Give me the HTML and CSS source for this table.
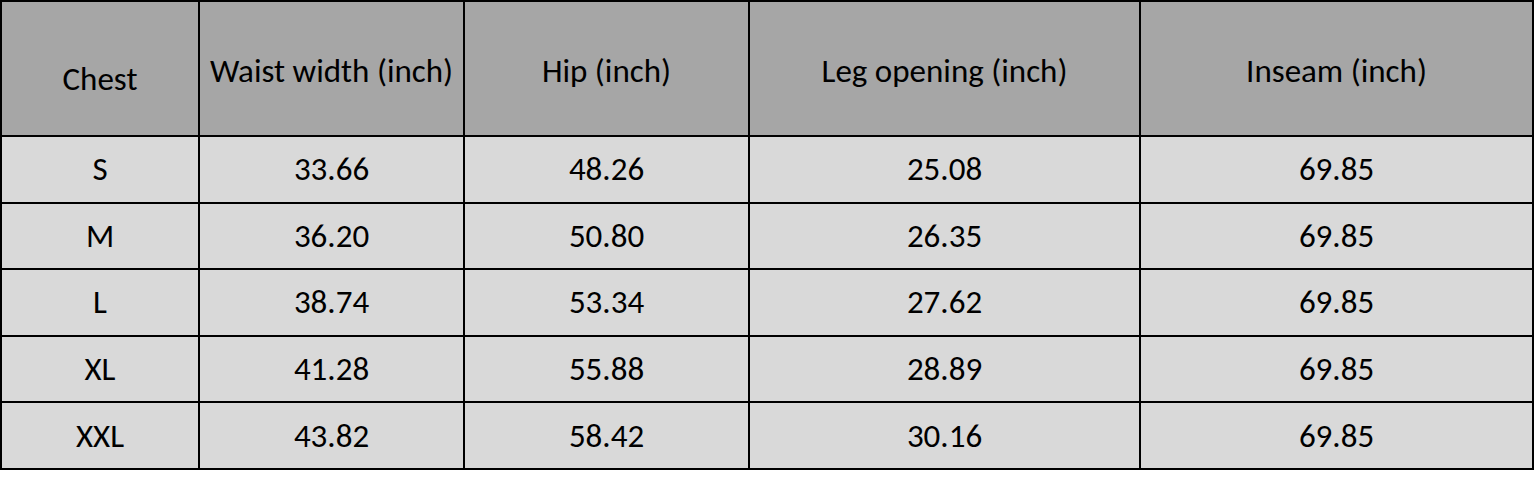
FILE: index.html
```html
<!DOCTYPE html>
<html>
<head>
<meta charset="utf-8">
<link rel="stylesheet" href="styles.css">
</head>
<body>
<table class="size-table">
  <colgroup>
    <col class="c1"><col class="c2"><col class="c3"><col class="c4"><col class="c5">
  </colgroup>
  <thead>
    <tr class="head">
      <th class="chest">Chest</th>
      <th>Waist width (inch)</th>
      <th>Hip (inch)</th>
      <th>Leg opening (inch)</th>
      <th>Inseam (inch)</th>
    </tr>
  </thead>
  <tbody>
    <tr><td>S</td><td>33.66</td><td>48.26</td><td>25.08</td><td>69.85</td></tr>
    <tr><td>M</td><td>36.20</td><td>50.80</td><td>26.35</td><td>69.85</td></tr>
    <tr><td>L</td><td>38.74</td><td>53.34</td><td>27.62</td><td>69.85</td></tr>
    <tr><td>XL</td><td>41.28</td><td>55.88</td><td>28.89</td><td>69.85</td></tr>
    <tr><td>XXL</td><td>43.82</td><td>58.42</td><td>30.16</td><td>69.85</td></tr>
  </tbody>
</table>
</body>
</html>
```
FILE: styles.css
```css
html, body {
  margin: 0;
  padding: 0;
  background: #ffffff;
}
.size-table {
  border-collapse: collapse;
  table-layout: fixed;
  width: 1532px;
  margin-left: 0;
  font-family: "Carlito", "Open Sans", sans-serif;
  font-size: 33px;
  color: #000;
}
.c1 { width: 198px; }
.c2 { width: 265px; }
.c3 { width: 285px; }
.c4 { width: 391px; }
.c5 { width: 393px; }
.size-table th,
.size-table td {
  border: 2px solid #000;
  text-align: center;
  padding: 0;
  font-weight: normal;
  white-space: nowrap;
}
.head th {
  background: #a6a6a6;
  height: 135px;
  vertical-align: top;
  padding-top: 49px;
  box-sizing: border-box;
  line-height: 40px;
}
.head th.chest {
  padding-top: 57px;
}
.size-table td {
  background: #d9d9d9;
  height: 64.6px;
  line-height: 40px;
}
```
